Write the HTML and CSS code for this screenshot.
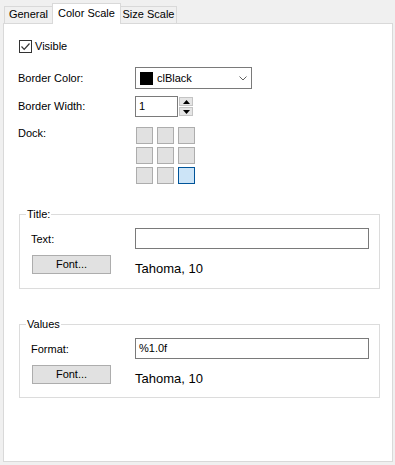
FILE: index.html
```html
<!DOCTYPE html>
<html>
<head>
<meta charset="utf-8">
<link rel="stylesheet" href="styles.css">
</head>
<body>
<div class="tabs">
  <div class="tab tab-first">General</div>
  <div class="tab tab-active">Color Scale</div>
  <div class="tab tab-last">Size Scale</div>
</div>
<div class="panel">
  <div class="check-row">
    <span class="checkbox"><svg width="11" height="11" viewBox="0 0 11 11"><polyline points="1.5,5.5 4.2,8.3 9.5,2.5" fill="none" stroke="#333" stroke-width="1.2"/></svg></span>
    <span class="check-label">Visible</span>
  </div>
  <div class="row row-color">
    <span class="label">Border Color:</span>
    <div class="combo">
      <span class="swatch"></span>
      <span class="combo-text">clBlack</span>
      <svg class="chevron" width="8" height="5" viewBox="0 0 8 5"><polyline points="0.5,0.5 4,4 7.5,0.5" fill="none" stroke="#606060" stroke-width="1"/></svg>
    </div>
  </div>
  <div class="row row-width">
    <span class="label">Border Width:</span>
    <div class="edit edit-small">1</div>
    <div class="spin">
      <span class="spin-btn"><svg width="7" height="4" viewBox="0 0 7 4"><polygon points="0,4 7,4 3.5,0" fill="#000"/></svg></span>
      <span class="spin-btn"><svg width="7" height="4" viewBox="0 0 7 4"><polygon points="0,0 7,0 3.5,4" fill="#000"/></svg></span>
    </div>
  </div>
  <div class="row row-dock">
    <span class="label label-dock">Dock:</span>
    <div class="dock">
      <span class="cell"></span><span class="cell"></span><span class="cell"></span>
      <span class="cell"></span><span class="cell"></span><span class="cell"></span>
      <span class="cell"></span><span class="cell"></span><span class="cell cell-on"></span>
    </div>
  </div>
  <div class="group group-title">
    <span class="legend">Title:</span>
    <div class="grow">
      <span class="glabel">Text:</span>
      <div class="edit edit-wide"></div>
    </div>
    <div class="brow">
      <div class="button">Font...</div>
      <span class="font-name">Tahoma, 10</span>
    </div>
  </div>
  <div class="group group-values">
    <span class="legend">Values</span>
    <div class="grow">
      <span class="glabel">Format:</span>
      <div class="edit edit-wide">%1.0f</div>
    </div>
    <div class="brow">
      <div class="button">Font...</div>
      <span class="font-name">Tahoma, 10</span>
    </div>
  </div>
</div>
</body>
</html>
```
FILE: styles.css
```css
* { box-sizing: border-box; }
html, body { margin: 0; padding: 0; }
body {
  background: #f0f0f0;
  font-family: "Liberation Sans", Arial, sans-serif;
  font-size: 11px;
  color: #000;
  width: 395px;
  height: 465px;
  overflow: hidden;
}
.tabs {
  display: flex;
  align-items: flex-end;
  height: 23px;
  padding-left: 4px;
}
.tab {
  height: 17px;
  line-height: 15px;
  text-align: center;
  border: 1px solid #d9d9d9;
  border-bottom: none;
  background: #f0f0f0;
}
.tab-first { width: 48px; border-right: none; }
.tab-last { width: 56px; border-left: none; }
.tab-active {
  width: 69px;
  height: 21px;
  line-height: 18px;
  background: #fff;
  margin-bottom: -1px;
  position: relative;
  z-index: 1;
}
.panel {
  margin-left: 3px;
  width: 390px;
  height: 439px;
  border: 1px solid #d9d9d9;
  background: #fff;
  padding: 16px 0 0 14px;
}
.check-row {
  display: flex;
  align-items: center;
  height: 13px;
  margin-left: 1px;
}
.checkbox {
  width: 13px;
  height: 13px;
  border: 1px solid #333;
  background: #fff;
  display: flex;
  align-items: center;
  justify-content: center;
}
.check-label { margin-left: 3px; line-height: 13px; }
.row { display: flex; align-items: center; }
.label { width: 117px; }
.row-color { margin-top: 14px; height: 22px; }
.combo {
  width: 117px;
  height: 22px;
  border: 1px solid #7a7a7a;
  display: flex;
  align-items: center;
  padding-left: 4px;
}
.swatch { width: 13px; height: 13px; background: #000; }
.combo-text { margin-left: 4px; flex: 1; }
.chevron { margin-right: 4px; }
.row-width { margin-top: 7px; height: 21px; align-items: flex-start; }
.row-width .label { line-height: 21px; }
.edit {
  height: 21px;
  border: 1px solid #7a7a7a;
  background: #fff;
  padding-left: 3px;
  line-height: 19px;
}
.edit-small { width: 43px; }
.spin {
  margin-left: 1px;
  margin-top: 1px;
  display: flex;
  flex-direction: column;
  gap: 1px;
}
.spin-btn {
  width: 14px;
  height: 9px;
  background: #e5e5e5;
  border: 1px solid #c4c4c4;
  display: flex;
  align-items: center;
  justify-content: center;
}
.row-dock { margin-top: 10px; align-items: flex-start; }
.label-dock { line-height: 13px; width: 118px; }
.dock {
  display: grid;
  grid-template-columns: repeat(3, 17px);
  grid-auto-rows: 17px;
  column-gap: 4px;
  row-gap: 3px;
}
.cell { background: #e1e1e1; border: 1px solid #adadad; }
.cell-on { background: #cce4f7; border-color: #005499; }
.group {
  position: relative;
  margin-left: 1px;
  width: 361px;
  border: 1px solid #dcdcdc;
  padding: 13px 0 0 11px;
}
.group-title { margin-top: 30px; height: 75px; }
.group-values { margin-top: 35px; height: 74px; }
.legend {
  position: absolute;
  top: -7px;
  left: 6px;
  background: #fff;
  padding: 0 1px;
  line-height: 13px;
}
.grow { display: flex; align-items: center; height: 21px; }
.glabel { width: 104px; }
.edit-wide { width: 234px; }
.brow { display: flex; align-items: flex-start; margin-top: 6px; }
.button {
  margin-left: 1px;
  width: 79px;
  height: 19px;
  background: #e1e1e1;
  border: 1px solid #adadad;
  text-align: center;
  line-height: 16px;
}
.font-name {
  margin-left: 24px;
  margin-top: 6px;
  font-size: 13px;
  line-height: 15px;
}
```
